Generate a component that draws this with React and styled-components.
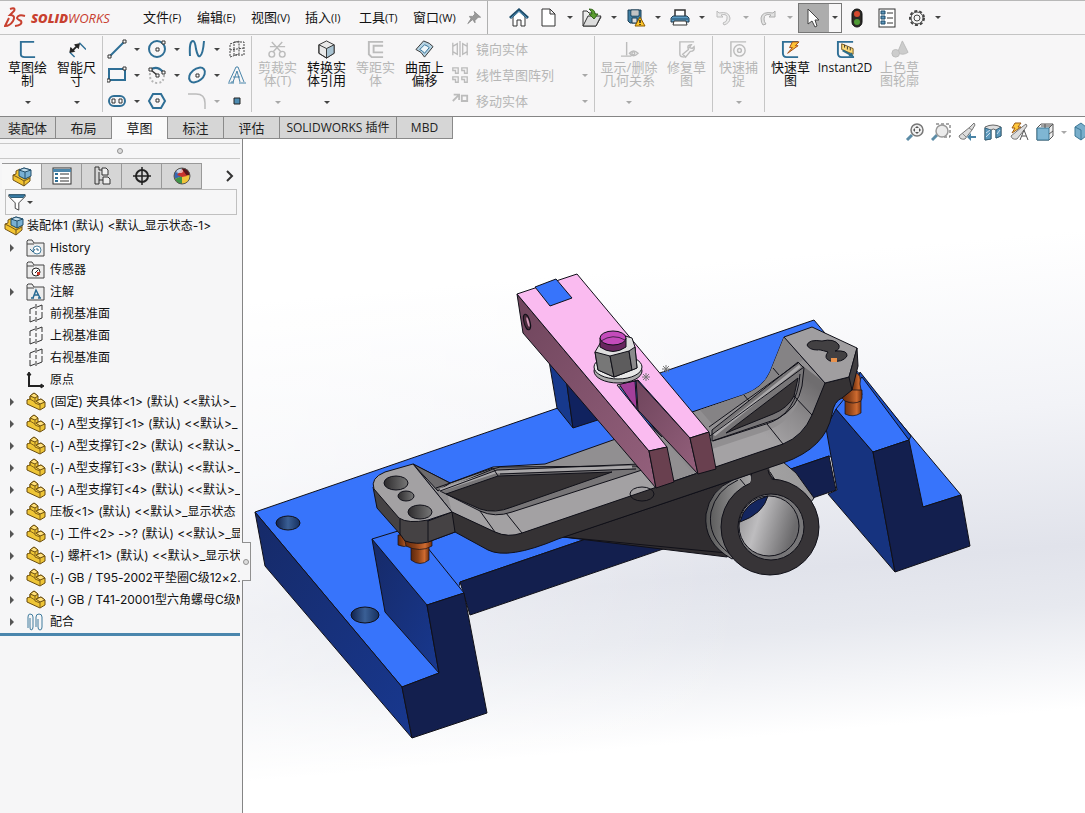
import React from 'react'
import styled, { createGlobalStyle } from 'styled-components'

const GlobalStyle = createGlobalStyle`
* {
    box-sizing: border-box;
}

body {
    margin: 0;
    background: #fff;
    color: #111;
    font-family: 'Open Sans', 'Noto Sans CJK SC', sans-serif;
    font-size: 12px;
}

button {
    border: 0;
    padding: 0;
    background: none;
    color: inherit;
    font: inherit;
}

ul {
    list-style: none;
    margin: 0;
    padding: 0;
}
`

const Page = styled.div`
display: flex;
flex-direction: column;
min-height: 100vh;
overflow: hidden;
`

const Svg = styled.svg`
display: block;
flex: none;
fill: none;
stroke-width: ${({ $line }) => $line || 1};
`

/* top bar */

const TopBar = styled.header`
display: flex;
align-items: center;
height: 35px;
border-top: 1px solid #b8b8b8;
border-bottom: 1px solid #c4c4c4;
background: #f7f6f7;
`

const Brand = styled.div`
display: flex;
align-items: center;
gap: 5px;
width: 143px;
padding-left: 4px;
color: #c8402f;
font-family: 'Open Sans', sans-serif;
font-size: 13px;
font-style: italic;
`

const BrandName = styled.span`
font-weight: 400;

b {
    font-weight: 800;
}
`

const Menu = styled.nav`
display: flex;
align-items: center;
align-self: stretch;
width: 345px;
border-right: 1px solid #b0b0b0;
`

const MenuItem = styled.button`
width: 54px;
font-size: 13px;
line-height: 20px;
text-align: left;
white-space: nowrap;

small {
    font-size: 11px;
}
`

const QuickBar = styled.div`
display: flex;
align-items: center;
padding-left: 16px;
`

const QuickItem = styled.div`
display: flex;
align-items: center;
height: 30px;
border: 1px solid ${({ $active }) => ($active ? '#777' : 'transparent')};
border-width: ${({ $active }) => ($active ? '1px' : '1px 0')};
`

const QuickButton = styled.button`
display: flex;
align-items: center;
justify-content: center;
width: ${({ $wide }) => ($wide ? 30 : 28)}px;
height: 28px;
background: ${({ $active }) => ($active ? '#adadad' : 'none')};
`

const ArrowButton = styled.button`
display: flex;
align-items: center;
justify-content: center;
width: ${({ $width }) => $width || 16}px;
height: 20px;
color: #444;

&:disabled {
    color: #a8a8a8;
}

&::after {
    content: '';
    border: 3px solid transparent;
    border-top-color: currentColor;
    border-bottom: 0;
}
`

/* ribbon */

const Ribbon = styled.div`
display: flex;
height: 82px;
padding: 1px 0 4px 2px;
border-bottom: 1px solid #858585;
background: #f7f6f7;
`

const Group = styled.div`
display: flex;
padding: 0 1px;
border-right: 1px solid #c6c6c6;

&:last-child {
    border-right: 0;
}
`

const Tool = styled.div`
display: flex;
flex-direction: column;
align-items: center;
justify-content: space-between;
width: ${({ $width }) => $width || 49}px;
`

const ToolButton = styled.button`
display: flex;
flex-direction: column;
align-items: center;
width: 100%;
padding-top: 4px;
font-size: ${({ $latin }) => ($latin ? 12 : 13)}px;
line-height: 13px;
white-space: nowrap;
color: #111;

&:disabled {
    color: #b6b6b6;
}
`

const ToolText = styled.span`
margin-top: 2px;
text-align: center;
white-space: pre-line;
`

const SketchGrid = styled.div`
display: grid;
grid-template-columns: 40px 40px 40px 25px;
grid-template-rows: repeat(3, 26px);
padding-left: 1px;
width: 146px;
`

const SketchCell = styled.div`
display: flex;
align-items: center;
`

const SketchButton = styled.button`
display: flex;
align-items: center;
justify-content: center;
width: 24px;
height: 24px;
`

const EntityList = styled.div`
display: grid;
grid-template-rows: repeat(3, 26px);
width: 144px;
padding-left: 2px;
`

const EntityRow = styled.div`
display: flex;
align-items: center;
justify-content: space-between;
`

const EntityButton = styled.button`
display: flex;
align-items: center;
gap: 7px;
font-size: 13px;
line-height: 20px;

&:disabled {
    color: #b6b6b6;
}
`

/* tabs */

const TabStrip = styled.div`
position: relative;
z-index: 1;
display: flex;
justify-content: space-between;
height: 22px;
`

const Tabs = styled.div`
display: flex;
border-bottom: 1px solid #8a8a8a;
`

const Tab = styled.button`
width: ${({ $width }) => $width || 56}px;
height: ${({ $active }) => ($active ? 22 : 21)}px;
border-right: 1px solid #8a8a8a;
background: ${({ $active }) => ($active ? '#fafafa' : '#d6d6d6')};
font-size: ${({ $latin }) => ($latin ? 12 : 13)}px;
line-height: 20px;
white-space: nowrap;
color: #222;
`

const HeadsUp = styled.div`
display: flex;
align-items: flex-start;
width: 180px;
padding-top: 5px;
overflow: visible;
`

const ViewButton = styled.button`
flex: none;
width: 26px;
height: 20px;
`

/* feature tree */

const Body = styled.div`
display: flex;
flex: 1;
`

const Sidebar = styled.aside`
position: relative;
flex: none;
width: 243px;
border-right: 1px solid #858585;
background: #f6f6f7;
`

const Splitter = styled.div`
display: flex;
align-items: center;
justify-content: center;
width: 240px;
height: 16px;
margin-top: 4px;
border-top: 1px solid #c8c8c8;
border-bottom: 1px solid #c8c8c8;
`

const Dot = styled.span`
width: 6px;
height: 6px;
border: 1px solid #909090;
border-radius: 50%;
background: #ddd;
`

const PanelTabs = styled.div`
display: flex;
width: 240px;
height: 26px;
margin-top: 4px;
padding-left: 2px;
`

const PanelTab = styled.button`
display: flex;
align-items: center;
justify-content: center;
width: 40px;
height: 26px;
border: 1px solid #999;
border-width: ${({ $active }) => ($active ? '1px 1px 0 0' : '1px 1px 1px 0')};
background: ${({ $active }) => ($active ? '#f8f8f8' : '#d6d6d6')};
`

const MoreButton = styled.button`
display: flex;
align-items: center;
justify-content: center;
width: 20px;
margin-left: 18px;
`

const Filter = styled.label`
display: flex;
align-items: center;
width: 232px;
height: 26px;
margin: 0 0 0 5px;
border: 1px solid #c0c0c0;
padding-left: 2px;
`

const FilterInput = styled.input`
flex: 1;
min-width: 0;
border: 0;
outline: 0;
background: none;
`

const Tree = styled.ul`
width: 240px;
border-bottom: 3px solid #4a86ad;
overflow: hidden;
font-family: Inter, 'Noto Sans CJK SC', sans-serif;
font-variant-ligatures: none;
`

const Node = styled.li`
display: flex;
align-items: center;
height: 22px;
padding-left: ${({ $root }) => ($root ? 4 : 8)}px;
white-space: nowrap;
font-size: 12px;
line-height: 20px;
`

const Expander = styled.button`
flex: none;
width: 18px;
height: 20px;
visibility: ${({ $hidden }) => ($hidden ? 'hidden' : 'visible')};

&::after {
    content: '';
    display: block;
    width: 0;
    margin-left: 2px;
    border: 4px solid transparent;
    border-left-color: #555;
    border-right: 0;
}
`

const NodeText = styled.span`
margin-left: ${({ $root }) => ($root ? 3 : 4)}px;
`

const Handle = styled.button`
position: absolute;
top: 403px;
right: -9px;
display: flex;
align-items: center;
justify-content: center;
width: 9px;
height: 39px;
border: 1px solid #909090;
border-left: 0;
background: #f6f6f7;
`

const Viewport = styled.main`
flex: 1;
min-width: 0;
background:
    linear-gradient(90deg, rgba(255, 255, 255, 0.5) 0%, rgba(255, 255, 255, 0) 60%),
    linear-gradient(175deg, #fff 0%, #fff 22%, #f2f3f7 45%, #e1e3eb 64%, #e7e9ef 72%, #fff 86%, #fff 100%);
`

const Model = styled.svg`
display: block;
width: 100%;
height: 100%;
fill: none;
stroke: #101018;
stroke-width: 1;
stroke-linejoin: round;
`

const B = '#2f6f96'
const K = '#333'
const G = '#bcbcbc'

const part = (
    <g stroke="#6a4d10" strokeLinejoin="round">
        <path d="M1 8 L4 7 V4 L8 1 L12 4 V8 L15 7 L19 10 V15 L14 18 L1 12Z" fill="#eec536" />
        <path d="M4 4 L8 1 L12 4 L9 6Z M10 9 L15 7 L19 10 L14 12Z" fill="#ffe07a" />
        <path d="M9 6 V11 L14 13 M14 12 V18 M4 7 V4 M1 8 L4 7 L9 10" stroke="#84641a" />
    </g>
)

const assembly = (
    <g strokeLinejoin="round">
        <path d="M1 8 L4 7 V4 L8 2 L9 9 L13 12 L18 9 V14 L12 19 L1 13Z" fill="#f3c431" stroke="#73541a" />
        <path d="M1 8 L7 11 L12 14 V19 M12 14 L18 11" stroke="#73541a" />
        <path d="M7 3 L12 1 L19 3 V9 L13 12 L7 9Z" fill="#79b0d3" stroke="#234f6b" />
        <path d="M7 3 L12 1 L19 3 L13 5Z" fill="#c2ddec" stroke="#234f6b" />
        <path d="M13 5 V12" stroke="#234f6b" />
    </g>
)

const folder = <path d="M1 3 V18 H18 V5 H8 L6 2 H2 L1 3 M1 6 H8" fill="#ececec" stroke="#444" />
const plane = <path d="M4 5 L9 3 M11 3 L16 1 V6 M16 8 V14 L11 16 M9 16 L4 18 V12 M4 10 V5 M10 0 V5 M10 7 V11 M10 13 V18" stroke="#333" />

const icons = {
    home: (
        <g>
            <path d="M4 9 V18 H8 V12 H12 V18 H16 V9 L10 3Z" fill="#fff" stroke={K} />
            <path d="M1 10 L10 2 L19 10" stroke="#1d4c6a" strokeWidth="3" />
            <path d="M2 10 L10 3 L18 10" stroke="#5d9cc3" />
        </g>
    ),
    file: <path d="M4 1 H12 L17 6 V18 H4Z M12 1 V6 H17" fill="#fff" stroke={K} />,
    open: (
        <g>
            <path d="M1 18 V3 H5 L7 5 H13 V9 H19 L14 18Z" fill="#ececec" stroke={K} />
            <path d="M1 18 L6 8 H19 L14 18Z" fill="#ddd" stroke={K} />
            <path d="M7 1 Q13 1 13 6 H16 L12 11 L7 6 H10 Q10 3 7 1Z" fill="#5b9d2f" stroke="#32641a" />
        </g>
    ),
    save: (
        <g>
            <path d="M2 2 H15 V15 H4 L2 13Z" fill="#3f7ea4" stroke="#1d3f55" />
            <path d="M5 2 H13 V8 H5Z" fill="#fff" stroke="#1d3f55" />
            <path d="M6 4 H12 M6 6 H12" stroke="#888" />
            <path d="M6 10 H11 V15 H6Z" fill="#ddd" stroke="#1d3f55" />
            <path d="M14 9 L19 18 H9Z" fill="#ffc629" stroke="#8a5a00" />
            <path d="M14 12 V15 M14 16 V17" stroke="#222" strokeWidth="1.500" />
        </g>
    ),
    print: (
        <g>
            <path d="M5 9 V2 H15 V9" fill="#fff" stroke={K} strokeWidth="1.500" />
            <path d="M1 10 L3 8 H17 L19 10 V14 H1Z" fill="#5e9cc3" stroke="#1f3d52" />
            <path d="M2 11 H18" stroke="#1f4a66" />
            <path d="M4 13 H16 L17 17 H3Z" fill="#fff" stroke={K} />
        </g>
    ),
    undo: <path d="M3 3 V9 H9 L7 7 Q14 5 13 11 Q13 14 9 15 L10 17 Q16 15 16 10 Q15 3 5 5Z" fill="#ececec" stroke={G} />,
    redo: <path d="M17 3 V9 H11 L13 7 Q6 5 6 11 Q6 14 8 16 L5 17 Q3 15 3 10 Q4 3 15 5Z" fill="#e2e2e2" stroke="#adadad" />,
    cursor: <path d="M4 1 V16 L8 13 L11 19 L13 18 L11 12 H15Z" fill="#fff" stroke="#444" />,
    light: (
        <g>
            <rect x="5" y="1" width="10" height="18" rx="5" fill="#2c2a26" stroke="#111" />
            <circle cx="10" cy="6" r="3" fill="#d5492e" />
            <circle cx="10" cy="14" r="3" fill="#4f9b35" />
        </g>
    ),
    options: (
        <g>
            <rect x="2" y="1" width="16" height="18" fill="#fff" stroke={K} />
            <path d="M4 3 H8 V6 H4Z M4 8 H8 V11 H4Z M4 13 H8 V16 H4Z" fill="#5b93b8" stroke="#1e4c6b" />
            <path d="M10 5 H16 M10 10 H16 M10 15 H16" stroke={K} />
        </g>
    ),
    gear: (
        <g stroke="#444">
            <circle cx="10" cy="10" r="7" strokeWidth="2" strokeDasharray="3 2" />
            <circle cx="10" cy="10" r="6" fill="#f4f4f4" />
            <circle cx="10" cy="10" r="3" />
        </g>
    ),
    pin: <path d="M9 2 L17 9 L14 9 L10 13 L10 16 L7 12 L1 17 L5 11 L3 8 L7 8 L10 5Z" fill="#999" stroke="#888" />,
    sketch: <path d="M17 2 H3 V15 Q3 18 7 18 H18" stroke={B} strokeWidth="2" />,
    dimension: (
        <g>
            <path d="M3 13 L8 18 M13 3 L20 10" stroke={B} strokeWidth="1.500" />
            <path d="M5 12 L11 6" stroke="#222" strokeWidth="2" />
            <path d="M3 13 L4 8 L8 12Z M13 4 L8 5 L12 9Z" fill="#222" stroke="#222" />
        </g>
    ),
    line: (
        <g>
            <path d="M3 17 L17 3" stroke={B} strokeWidth="2" />
            <path d="M1 16 H4 V19 H1Z M16 1 H19 V4 H16Z" fill="#fff" stroke={K} />
        </g>
    ),
    circle: (
        <g>
            <circle cx="10" cy="10" r="8" stroke={B} strokeWidth="2" />
            <path d="M9 9 H12 V12 H9Z M15 2 H18 V5 H15Z" fill="#fff" stroke={K} />
        </g>
    ),
    spline: <path d="M3 17 Q2 2 6 2 Q8 2 9 10 Q11 19 13 17 Q16 15 17 2" stroke={B} strokeWidth="2" />,
    planes: (
        <g stroke="#444" strokeDasharray="2 1">
            <path d="M3 5 L12 2 V15 L3 18Z M7 3 H17 V16 H7Z M3 11 L17 9" />
        </g>
    ),
    rect: (
        <g>
            <path d="M2 4 H18 V15 H2Z" stroke={B} strokeWidth="2" />
            <path d="M0 14 H3 V17 H0Z M16 2 H19 V5 H16Z" fill="#fff" stroke={K} />
        </g>
    ),
    arc: (
        <g>
            <path d="M3 8 Q2 17 10 18 Q17 18 17 10" stroke="#b5b5b5" strokeWidth="2" strokeDasharray="2 2" />
            <path d="M3 5 Q10 0 16 7" stroke={B} strokeWidth="2" />
            <path d="M4 5 L10 10" stroke={K} strokeWidth="1.500" />
            <path d="M2 3 H5 V6 H2Z M9 9 H12 V12 H9Z M15 6 H18 V9 H15Z" fill="#fff" stroke={K} />
        </g>
    ),
    ellipse: (
        <g>
            <ellipse cx="10" cy="10" rx="9" ry="6" transform="rotate(-40 10 10)" stroke={B} strokeWidth="2" />
            <path d="M9 9 H12 V12 H9Z" fill="#fff" stroke={K} />
        </g>
    ),
    text: <path d="M2 17 L9 2 H11 L17 17 M7 17 L4 17 M13 17 L10 6 L6 17 M6 12 H13 M1 18 H7 M12 18 H19" stroke="#4884a9" />,
    slot: (
        <g>
            <rect x="2" y="5" width="16" height="10" rx="5" stroke={B} strokeWidth="2" />
            <path d="M5 8 H8 V12 H5Z M12 8 H15 V12 H12Z" fill="#fff" stroke={K} />
        </g>
    ),
    polygon: (
        <g>
            <path d="M6 3 H14 L18 10 L14 17 H6 L2 10Z" stroke={B} strokeWidth="2" />
            <path d="M9 8 H12 V11 H9Z" fill="#fff" stroke={K} />
        </g>
    ),
    fillet: <path d="M1 3 H9 Q18 3 18 12 V18" stroke={G} strokeWidth="1.500" />,
    point: <path d="M7 7 H13 V13 H7Z" fill="#4e8cb2" stroke="#222" />,
    trim: (
        <g stroke={G} strokeWidth="1.500">
            <path d="M4 2 L14 13 M15 2 L5 13 M2 7 H18" />
            <circle cx="4" cy="15" r="3" />
            <circle cx="15" cy="15" r="3" />
        </g>
    ),
    convert: (
        <g stroke={K}>
            <path d="M2 5 L10 1 L18 5 V14 L10 19 L2 14Z" fill="#e9e9e9" />
            <path d="M10 9 L18 5 V14 L10 19Z" fill="#a9c3d2" />
            <path d="M2 5 L10 9 M2 5 V14 L10 19" />
        </g>
    ),
    offset: <path d="M18 2 H3 V15 L6 18 H18 M18 6 H8 V13 H18" stroke={G} strokeWidth="2" />,
    surface: (
        <g stroke={K}>
            <path d="M1 10 L9 1 Q16 3 19 7 L10 18 Q7 12 1 10Z" fill="#b6d3e3" />
            <path d="M5 10 L10 5 Q13 6 15 8 L10 14 Q8 11 5 10Z" fill="#eef6fa" stroke={B} />
        </g>
    ),
    mirror: <path d="M10 1 V19 M2 3 V17 M2 7 L7 4 V16 L2 13 M18 3 V17 M18 7 L13 4 V16 L18 13" stroke={G} strokeWidth="1.500" />,
    pattern: <path d="M2 2 H8 V8 H5 V5 H2Z M12 2 H18 V8 H15 V5 H12Z M2 12 H8 V18 H5 V15 H2Z M12 12 H18 V18 H15 V15 H12Z" stroke={G} strokeWidth="1.500" />,
    move: <path d="M2 10 L8 4 M3 3 H9 V9 M12 4 H18 V10 H12Z" stroke={G} strokeWidth="2" />,
    relation: (
        <g stroke={G} strokeWidth="1.500">
            <path d="M7 2 V16 M1 17 H12 M10 14 Q14 9 19 14 Q14 19 10 14Z" />
            <circle cx="14" cy="14" r="1.500" />
        </g>
    ),
    repair: (
        <g stroke={G} strokeWidth="1.500">
            <path d="M18 2 H3 V15 Q3 18 8 18" />
            <path d="M6 15 L12 10 Q10 5 15 5 L13 8 L16 9 L18 7 Q19 12 14 12 L9 18Z" />
        </g>
    ),
    snap: (
        <g stroke={G} strokeWidth="1.500">
            <path d="M18 2 H2 V18" />
            <circle cx="11" cy="11" r="6" />
            <circle cx="11" cy="11" r="2" />
        </g>
    ),
    rapid: (
        <g>
            <path d="M18 2 H2 V14 Q2 18 6 18 H18" stroke={B} strokeWidth="2" />
            <path d="M12 2 H19 L15 6 H18 L7 14 L12 8 H9Z" fill="#ffc234" stroke="#a34b16" />
        </g>
    ),
    instant: (
        <g>
            <path d="M18 2 H2 V14 Q2 18 6 18 H19" stroke={B} strokeWidth="2" />
            <path d="M6 4 L18 9 V15 L6 10Z" fill="#ffdc78" stroke="#70531b" />
            <path d="M9 5 V8 M12 7 V10 M15 8 V11" stroke="#333" />
            <path d="M7 11 L16 16" stroke="#2d6d88" strokeWidth="2" />
            <path d="M19 18 L13 17 L16 13Z" fill="#2d6d88" />
        </g>
    ),
    shaded: (
        <g fill="#ccc" stroke={G}>
            <path d="M13 1 L19 13 Q13 17 8 13Z" />
            <circle cx="6" cy="14" r="4" />
        </g>
    ),
    assembly,
    part,
    list: (
        <g>
            <rect x="1" y="2" width="18" height="16" fill="#fff" stroke={K} />
            <path d="M1 3 H19 V6 H1Z" fill="#4c86aa" />
            <path d="M3 8 H6 M3 12 H6 M3 15 H6" stroke={B} strokeWidth="2" />
            <path d="M8 8 H17 M8 12 H17 M8 15 H17" stroke={K} />
        </g>
    ),
    config: (
        <g stroke={K}>
            <path d="M3 1 H7 V4 H10 M3 1 V18 H7 V6 M7 14 H11" />
            <path d="M10 2 H14 L16 4 V9 H10Z M11 11 H16 L18 13 V18 H11Z" fill="#eee" />
        </g>
    ),
    target: (
        <g stroke="#222" strokeWidth="2">
            <circle cx="10" cy="10" r="6" />
            <path d="M10 1 V19 M1 10 H19" strokeWidth="1.500" />
        </g>
    ),
    ball: (
        <g>
            <circle cx="10" cy="10" r="8" fill="#f0c43a" />
            <path d="M10 10 L2 9 Q3 3 10 2Z" fill="#7e9ac3" />
            <path d="M10 10 L10 2 Q17 2 18 9Z" fill="#56151c" />
            <path d="M10 10 L3 13 Q1 9 3 6Z" fill="#3568b4" />
            <path d="M10 10 L3 13 Q5 18 10 18Z" fill="#3f9448" />
            <path d="M5 9 L10 3 L15 10 L10 11Z" fill="#c8342e" />
            <ellipse cx="8" cy="5" rx="3" ry="2" fill="#fff" opacity=".6" />
            <circle cx="10" cy="10" r="8" stroke="#555" />
        </g>
    ),
    chevron: <path d="M7 5 L12 10 L7 15" stroke="#333" strokeWidth="2" />,
    funnel: (
        <g>
            <path d="M1 2 H19 V4 L12 11 V19 L8 17 V11 L1 4Z" fill="#fff" stroke="#333" />
            <path d="M1 2 H19 L17 5 H3Z" fill="#3a7ea8" stroke="#24536f" />
        </g>
    ),
    history: (
        <g>
            {folder}
            <circle cx="11" cy="12" r="4" fill="#fff" stroke="#49809f" />
            <path d="M11 10 V12 H13 M4 11 L7 14 L9 11" stroke="#2c6689" />
        </g>
    ),
    sensor: (
        <g>
            {folder}
            <circle cx="10" cy="12" r="4" fill="#fff" stroke="#222" />
            <path d="M9 13 L12 10" stroke="#222" />
            <path d="M11 12 H14 V15 H11Z" fill="#c93a2b" />
        </g>
    ),
    notes: (
        <g>
            {folder}
            <path d="M7 16 L10 8 L14 16 M8 13 H12 M5 16 H8 M12 16 H15" stroke="#276a93" strokeWidth="1.500" />
        </g>
    ),
    plane,
    origin: (
        <g stroke="#222" strokeWidth="2">
            <path d="M3 5 V16 H15" />
            <path d="M1 5 L3 2 L5 5Z M15 14 L18 16 L15 18Z" fill="#222" strokeWidth="1" />
        </g>
    ),
    mates: (
        <g stroke="#3f7b9d">
            <path d="M2 16 V5 Q2 2 4 2 Q7 2 7 5 V15 Q7 18 5 18 Q4 18 4 15 V6" />
            <path d="M10 15 V5 Q10 2 13 2 Q16 2 16 5 V15 Q16 18 14 18 Q12 18 12 15 V7" />
        </g>
    ),
    zoomFit: (
        <g>
            <path d="M2 18 L7 13" stroke="#5c8ca6" strokeWidth="3" />
            <circle cx="12" cy="8" r="6" fill="#f1f1f1" stroke="#777" strokeWidth="1.500" />
            <path d="M12 4 L14 6 H10Z M12 12 L14 10 H10Z M8 8 L10 6 V10Z M16 8 L14 6 V10Z" fill="#555" />
        </g>
    ),
    zoomArea: (
        <g>
            <path d="M5 2 H19 V15 H12" stroke="#555" strokeDasharray="3 2" />
            <path d="M1 18 L6 13" stroke="#5c8ca6" strokeWidth="3" />
            <circle cx="11" cy="9" r="6" fill="#ececec" stroke="#999" strokeWidth="1.500" />
        </g>
    ),
    previous: (
        <g>
            <path d="M2 14 L13 5 L17 1 L18 3 L15 8 L8 17 Q3 18 2 14Z" fill="#dcdcdc" stroke="#777" />
            <path d="M5 11 L9 15 M12 6 L15 8" stroke="#888" />
            <path d="M19 14 H14 V11 L10 15 L14 19 V16 H19Z" fill="#4a84a6" />
        </g>
    ),
    section: (
        <g>
            <path d="M2 5 Q10 1 18 5 V14 L13 16 V8 Q10 6 8 8 V17 L2 18Z" fill="#ddd" stroke="#666" />
            <path d="M2 6 L8 8 V17 L2 18Z M13 8 L18 5 V14 L13 16Z" fill="#5d9abd" stroke="#35647f" />
            <path d="M3 11 L7 8 M3 15 L7 11 M14 12 L17 8" stroke="#cde" />
        </g>
    ),
    dynamic: (
        <g>
            <path d="M2 14 L13 5 L17 2 L18 4 L15 8 L8 17 Q3 18 2 14Z" fill="#ddd" stroke="#777" />
            <path d="M6 1 L12 1 L9 5 L12 5 L3 11 L6 6 H3Z" fill="#ffc83d" stroke="#9b5b17" />
            <path d="M11 18 L15 8 L19 18 M13 14 H17" stroke="#555" />
        </g>
    ),
    cube: (
        <g>
            <path d="M6 2 H18 V14 L14 18 H2 V6Z" fill="#eee" stroke="#555" />
            <path d="M2 6 H14 V18 H2Z" fill="#7fb6d3" stroke="#3c7896" />
            <path d="M14 6 L18 2 M10 2 V6 M14 12 L18 9 M6 4 H16" stroke="#555" />
        </g>
    ),
    style: <path d="M8 5 L14 1 L19 5 V14 L14 18 L8 14Z M8 5 L14 8 V18" fill="#78aecb" stroke="#3c7896" />,
}

const Icon = ({ name, size = 20 }) => (
    <Svg width={size} height={size} viewBox="0 0 20 20" aria-hidden="true">
        {icons[name]}
    </Svg>
)

const menus = [
    ['文件', '(F)'],
    ['编辑', '(E)'],
    ['视图', '(V)'],
    ['插入', '(I)'],
    ['工具', '(T)'],
    ['窗口', '(W)'],
]

const quick = [
    { icon: 'home', label: '主页', wide: true },
    { icon: 'file', label: '新建', arrow: true },
    { icon: 'open', label: '打开', arrow: true },
    { icon: 'save', label: '保存', arrow: true },
    { icon: 'print', label: '打印', arrow: true },
    { icon: 'undo', label: '撤消', arrow: true, disabled: true },
    { icon: 'redo', label: '重做', arrow: true, disabled: true },
    { icon: 'cursor', label: '选择', arrow: true, active: true, wide: true },
    { icon: 'light', label: '重建模型', wide: true },
    { icon: 'options', label: '文件属性', wide: true },
    { icon: 'gear', label: '选项', arrow: true, wide: true },
]

const groups = [
    [
        { icon: 'sketch', text: '草图绘\n制', arrow: true },
        { icon: 'dimension', text: '智能尺\n寸', arrow: true },
    ],
    [
        { icon: 'trim', text: '剪裁实\n体(T)', arrow: true, disabled: true },
        { icon: 'convert', text: '转换实\n体引用', arrow: true },
        { icon: 'offset', text: '等距实\n体', disabled: true },
        { icon: 'surface', text: '曲面上\n偏移' },
    ],
    [
        { icon: 'relation', text: '显示/删除\n几何关系', arrow: true, disabled: true, width: 66 },
        { icon: 'repair', text: '修复草\n图', disabled: true },
    ],
    [{ icon: 'snap', text: '快速捕\n捉', arrow: true, disabled: true }],
    [
        { icon: 'rapid', text: '快速草\n图' },
        { icon: 'instant', text: 'Instant2D', width: 60, latin: true },
        { icon: 'shaded', text: '上色草\n图轮廓', disabled: true },
    ],
]

const sketchTools = [
    ['line', '直线', true],
    ['circle', '圆', true],
    ['spline', '样条曲线', true],
    ['planes', '基准面'],
    ['rect', '矩形', true],
    ['arc', '圆弧', true],
    ['ellipse', '椭圆', true],
    ['text', '文字'],
    ['slot', '槽口', true],
    ['polygon', '多边形'],
    ['fillet', '圆角', true, true],
    ['point', '点'],
]

const entities = [
    ['mirror', '镜向实体'],
    ['pattern', '线性草图阵列', true],
    ['move', '移动实体', true],
]

const tabs = [
    { text: '装配体' },
    { text: '布局' },
    { text: '草图', active: true },
    { text: '标注' },
    { text: '评估' },
    { text: 'SOLIDWORKS 插件', width: 117, latin: true },
    { text: 'MBD', latin: true },
]

const panelTabs = ['assembly', 'list', 'config', 'target', 'ball']

const views = ['zoomFit', 'zoomArea', 'previous', 'section', 'dynamic', 'cube']

const nodes = [
    ['history', 'History', true],
    ['sensor', '传感器'],
    ['notes', '注解', true],
    ['plane', '前视基准面'],
    ['plane', '上视基准面'],
    ['plane', '右视基准面'],
    ['origin', '原点'],
    ['part', '(固定) 夹具体<1> (默认) <<默认>_', true],
    ['part', '(-) A型支撑钉<1> (默认) <<默认>_', true],
    ['part', '(-) A型支撑钉<2> (默认) <<默认>_', true],
    ['part', '(-) A型支撑钉<3> (默认) <<默认>_', true],
    ['part', '(-) A型支撑钉<4> (默认) <<默认>_', true],
    ['part', '压板<1> (默认) <<默认>_显示状态', true],
    ['part', '(-) 工件<2> ->? (默认) <<默认>_显', true],
    ['part', '(-) 螺杆<1> (默认) <<默认>_显示状', true],
    ['part', '(-) GB / T95-2002平垫圈C级12×2.', true],
    ['part', '(-) GB / T41-20001型六角螺母C级M', true],
    ['mates', '配合', true],
]

const Tools = ({ tools }) => tools.map(tool => (
    <Tool key={tool.icon} $width={tool.width}>
        <ToolButton disabled={tool.disabled} $latin={tool.latin}>
            <Icon name={tool.icon} size={19} />
            <ToolText>{tool.text}</ToolText>
        </ToolButton>
        {tool.arrow && <ArrowButton disabled={tool.disabled} aria-label={tool.text} />}
    </Tool>
))

const Fixture = () => (
    <Model viewBox="243 139 842 674" role="img" aria-label="装配体1">
        <defs>
            <linearGradient id="side" x1="0" y1="0" x2="1" y2="1">
                <stop offset="0" stopColor="#162a68" />
                <stop offset="1" stopColor="#18388f" />
            </linearGradient>
            <linearGradient id="pinkSide" x1="0" y1="0" x2="1" y2="1">
                <stop offset="0" stopColor="#6f455c" />
                <stop offset="1" stopColor="#94607c" />
            </linearGradient>
            <linearGradient id="metal" x1="0" y1="0" x2="1" y2="0">
                <stop offset="0" stopColor="#555" />
                <stop offset=".4" stopColor="#a5a4a5" />
                <stop offset="1" stopColor="#9a999a" />
            </linearGradient>
            <linearGradient id="bore" x1="0" y1="0" x2="1" y2=".3">
                <stop offset="0" stopColor="#8f8e90" />
                <stop offset=".4" stopColor="#bebdbf" />
                <stop offset="1" stopColor="#6b6a6c" />
            </linearGradient>
            <linearGradient id="copper" x1="0" y1="0" x2="1" y2="0">
                <stop offset="0" stopColor="#5d270c" />
                <stop offset=".4" stopColor="#8c4218" />
                <stop offset=".75" stopColor="#cf6b30" />
                <stop offset="1" stopColor="#6d2e0e" />
            </linearGradient>
            <linearGradient id="hole" x1="0" y1="0" x2="1" y2="0">
                <stop offset="0" stopColor="#10224f" />
                <stop offset=".5" stopColor="#3a5f95" />
                <stop offset="1" stopColor="#16305f" />
            </linearGradient>
            <linearGradient id="darkHole" x1="0" y1="0" x2="1" y2="0">
                <stop offset="0" stopColor="#2d2b2d" />
                <stop offset="1" stopColor="#777" />
            </linearGradient>
            <linearGradient id="bend" gradientUnits="userSpaceOnUse" x1="770" y1="440" x2="815" y2="385">
                <stop offset="0" stopColor="#a4a2a4" />
                <stop offset=".5" stopColor="#8d8b8d" />
                <stop offset="1" stopColor="#6f6d6f" />
            </linearGradient>
        </defs>

        {/* base plate */}
        <path d="M255 512 L814 320 L961 495 L923 507 L829 456 L460 582 L439 673 L402 687Z" fill="#3774fb" />
        <path d="M255 512 L402 687 L412 738 L265 566Z" fill="url(#side)" />
        <path d="M460 582 L829 456 L836 490 L470 615Z" fill="#131f4e" />
        <ellipse cx="288" cy="523" rx="12" ry="7" fill="url(#hole)" />
        <ellipse cx="365" cy="615" rx="14" ry="8" fill="url(#hole)" />

        {/* right foot */}
        <path d="M860 372 L911 436 L909 440 L858 378Z" fill="#1b4fc4" />
        <path d="M826 428 L836 409 L873 452 L895 572 L828 494 L837 490Z" fill="#16337f" />
        <path d="M836 409 L862 377 L909 440 L873 452Z" fill="#3774fb" />
        <path d="M873 452 L909 440 L923 507 L961 495 L970 546 L895 572Z" fill="#131f4e" />

        {/* left foot */}
        <path d="M372 539 L420 523 L464 593 L427 605Z" fill="#3774fb" stroke="none" />
        <path d="M398 531 L372 539 M427 605 L464 593 L427 547" />
        <path d="M372 539 L427 605 L439 673 L385 612Z" fill="url(#side)" />
        <path d="M427 605 L464 593 L487 713 L412 738 L402 687 L439 673Z" fill="#131f4e" />

        {/* post */}
        <path d="M548 355 L566 378 L573 428 L557 408Z" fill="#17398c" />
        <path d="M566 378 L604 395 L604 418 L573 428Z" fill="#10225f" />

        {/* support pins */}
        <g fill="url(#copper)" strokeWidth=".7">
            <path d="M398 535 V545 Q404 548 410 545 V535Z" />
            <path d="M411 538 V560 Q420 567 429 560 V538Z" />
            <path d="M404 536 H432 V546 Q420 553 406 546Z" />
            <path d="M855 372 Q862 375 860 384 L862 395 H850Z" />
            <path d="M841 390 H862 V398 L861 401 V413 Q853 418 845 414 V401 L841 397Z" />
            <path d="M845 401 Q853 405 861 401" />
        </g>

        {/* boss rib and cylinder */}
        <path d="M563 537 L727 482 L790 470 L812 495 L727 557Z" fill="#302d30" />
        <path d="M563 537 L727 553" />
        <path d="M732 559 Q703 543 706 514 Q710 490 733 480 L783 462 L796 473 L814 498 L790 530Z" fill="url(#metal)" />
        <path d="M730 554 Q707 537 711 512 Q716 490 738 480 M740 479 L750 491 M770 472 L775 480 L796 490" />
        <path d="M744 468 Q758 480 747 488 L728 505 L760 512 L790 486 Q768 484 769 462Z" fill="#373437" stroke="none" />
        <path d="M751 470 Q754 484 747 487 M768 470 Q769 479 780 481" />
        <ellipse cx="770" cy="527" rx="49" ry="48" fill="#373437" />
        <path d="M744 490 Q752 484 752 474 H768 Q769 480 780 483 L785 490Z" fill="#373437" stroke="none" />
        <ellipse cx="771" cy="527" rx="33" ry="33" fill="#777678" />
        <ellipse cx="769" cy="526" rx="30" ry="30" fill="url(#bore)" />
        <path d="M740 522 Q744 502 768 496 Q763 514 740 522Z" fill="#14265f" />

        {/* beam top */}
        <path d="M413 464 L450 483 L493 467 L545 464 L695 411 L743 395 Q763 388 770 372 L784 337 L825 383 L812 415 Q803 436 783 444 L522 533 Q508 538 495 532 L452 512Z" fill="#918f91" />
        <path d="M743 395 Q763 388 770 372 L784 337 L803 360 L712 424 L700 410Z" fill="#858385" stroke="none" />
        <path d="M413 464 L450 483 L438 491Z" fill="#6d6b6d" />
        <path d="M447 493 L480 511 Q495 518 512 512 L642 469 L655 488 L522 533 Q508 538 495 532 L452 512Z" fill="#a3a1a3" stroke="none" />
        <path d="M712 449 L766 431 Q792 422 800 397 L803 366 L825 383 L812 415 Q803 436 783 444 L715 467Z" fill="url(#bend)" stroke="none" />

        {/* beam front */}
        <path d="M452 512 L495 532 Q508 538 522 533 L783 444 Q803 436 812 415 L825 383 L853 376 L852 390 L842 398 Q834 401 832 414 Q826 448 783 463 L727 482 L558 539 Q508 560 488 550 L455 532 L428 542 L428 521Z" fill="#353234" />

        {/* left pocket */}
        <path d="M440 491 L493 469 L500 467 L636 466 L642 470 L512 512 Q495 518 480 511Z" fill="#777577" />
        <path d="M440 490 L495 472 L632 467" stroke="#aaa8aa" strokeWidth="3" />
        <path d="M446 494 L498 476 L612 472 L512 507 Q495 514 480 509Z" fill="#343133" />
        <path d="M436 488 L493 468 L498 476 M440 491 L497 470 L640 464 M500 474 L636 469 M480 511 L495 532 M506 513 L522 533" />

        {/* right pocket */}
        <path d="M712 430 L798 362 L804 368 L802 386 Q798 408 777 419 L712 441Z" fill="#777577" />
        <path d="M714 435 L800 366" stroke="#aaa8aa" strokeWidth="3" />
        <path d="M726 433 L798 378 L794 396 Q788 408 773 414Z" fill="#383537" />
        <path d="M710 436 L804 367 M709 427 L798 363 M713 441 L766 424 Q797 415 800 374 M767 424 L783 444 M794 396 L812 415 M744 395 L749 401 M773 368 L779 375" />

        {/* heads */}
        <path d="M373 487 L377 508 L400 534 L405 541 Q417 545 428 542 L455 532 L452 512 L428 521Z" fill="#454244" />
        <path d="M413 464 L385 472 Q370 478 374 489 L399 518 Q408 524 428 520 L452 512Z" fill="#a3a1a3" />
        <path d="M400 519 V535 M428 521 V541" />
        <ellipse cx="396" cy="483" rx="12" ry="7" fill="url(#darkHole)" />
        <ellipse cx="406" cy="496" rx="8" ry="5" fill="url(#darkHole)" />
        <ellipse cx="420" cy="512" rx="12" ry="7" fill="url(#darkHole)" />
        <path d="M784 337 L812 327 L857 348 L849 377 L825 383Z" fill="#a09ea0" />
        <path d="M857 348 L858 366 L852 390 L849 377Z" fill="#403d40" />
        <path d="M807 345 Q809 339 822 341 Q834 338 839 345 Q840 350 835 351 Q848 350 847 356 Q843 363 830 361 Q823 358 828 352 Q818 349 818 350 Q809 350 807 345Z" fill="#424042" />
        <path d="M831 358 H837 V362 H831Z" fill="#e9924d" stroke="none" />
        <ellipse cx="642" cy="494" rx="12" ry="7" />

        {/* clamp */}
        <path d="M618 385 L690 470 L698 474 L640 400Z" fill="#8d8b8d" stroke="none" />
        <path d="M638 409 L654 428 L662 437 L640 416Z" fill="#2c66e8" />
        <path d="M619 384 L635 381 L637 409 L630 400Z" fill="#a33f9a" />
        <path d="M636 379 L690 438 L698 474 L638 410Z" fill="url(#pinkSide)" />
        <path d="M517 294 L649 451 L656 488 L523 333Z" fill="url(#pinkSide)" />
        <path d="M517 294 L577 274 L709 432 L690 438 L638 380 L617 385 L667 447 L649 451Z" fill="#fabbf0" />
        <path d="M649 451 L667 447 L674 482 L656 488Z M690 438 L709 432 L716 469 L698 474Z" fill="#69404f" />
        <path d="M535 287 L556 279 L572 298 L550 306Z" fill="#3774fb" />
        <ellipse cx="527" cy="322" rx="3" ry="8" transform="rotate(-15 527 322)" fill="#4a2a3b" />
        <ellipse cx="528" cy="322" rx="1" ry="5" transform="rotate(-15 528 322)" fill="#d59dbb" stroke="none" />

        {/* washer, nut and stud */}
        <ellipse cx="618" cy="371" rx="24" ry="12" fill="#aaa" />
        <ellipse cx="618" cy="367" rx="24" ry="12" fill="#e7e7e7" />
        <path d="M595 352 L602 340 Q615 331 632 338 L635 347 L637 368 L614 377 L598 370Z" fill="#dedede" />
        <path d="M595 352 L610 356 L614 377 L598 370Z" fill="#777" />
        <path d="M610 356 L629 351 L632 370 L614 377Z" fill="#5d5c5d" />
        <path d="M629 351 L635 347 L637 368 L632 370Z" fill="#8b8a8b" />
        <path d="M600 338 V347 Q613 356 626 347 V338Z" fill="#68265f" />
        <ellipse cx="613" cy="338" rx="13" ry="7" fill="#c44bbb" />
        <path d="M601 341 Q613 333 625 340" strokeWidth=".7" />

        {/* origin marks */}
        <path d="M642 377 H650 M646 373 V381 M643 374 L649 380 M649 374 L643 380 M662 369 H670 M666 365 V373 M663 366 L669 372 M669 366 L663 372" stroke="#777" />
    </Model>
)

const App = () => (
    <Page>
        <GlobalStyle />
        <TopBar>
            <Brand>
                <Svg width="22" height="22" viewBox="0 0 22 22" stroke="#c8402f" $line={2}>
                    <path d="M6 2 Q12 0 10 4 L6 8 Q12 8 9 14 Q6 19 1 19 L5 11" />
                    <path d="M21 9 Q14 7 13 11 Q13 12 17 14 Q19 18 11 19" />
                </Svg>
                <BrandName><b>SOLID</b>WORKS</BrandName>
            </Brand>
            <Menu>
                {menus.map(([text, key]) => (
                    <MenuItem key={key}>{text}<small>{key}</small></MenuItem>
                ))}
                <button aria-label="固定菜单"><Icon name="pin" size={16} /></button>
            </Menu>
            <QuickBar>
                {quick.map(item => (
                    <QuickItem key={item.icon} $active={item.active}>
                        <QuickButton $wide={item.wide} $active={item.active} disabled={item.disabled} aria-label={item.label}>
                            <Icon name={item.icon} />
                        </QuickButton>
                        {item.arrow && <ArrowButton $width={item.wide ? 12 : 16} disabled={item.disabled} aria-label={`${item.label}菜单`} />}
                    </QuickItem>
                ))}
            </QuickBar>
        </TopBar>

        <Ribbon>
            <Group><Tools tools={groups[0]} /></Group>
            <Group>
                <SketchGrid>
                    {sketchTools.map(([icon, label, arrow, disabled]) => (
                        <SketchCell key={icon}>
                            <SketchButton disabled={disabled} aria-label={label}><Icon name={icon} /></SketchButton>
                            {arrow && <ArrowButton disabled={disabled} aria-label={`${label}菜单`} />}
                        </SketchCell>
                    ))}
                </SketchGrid>
            </Group>
            <Group>
                <Tools tools={groups[1]} />
                <EntityList>
                    {entities.map(([icon, text, arrow]) => (
                        <EntityRow key={icon}>
                            <EntityButton disabled><Icon name={icon} size={18} />{text}</EntityButton>
                            {arrow && <ArrowButton disabled aria-label={`${text}菜单`} />}
                        </EntityRow>
                    ))}
                </EntityList>
            </Group>
            <Group><Tools tools={groups[2]} /></Group>
            <Group><Tools tools={groups[3]} /></Group>
            <Group><Tools tools={groups[4]} /></Group>
        </Ribbon>

        <TabStrip>
            <Tabs>
                {tabs.map(tab => (
                    <Tab key={tab.text} $width={tab.width} $active={tab.active} $latin={tab.latin}>{tab.text}</Tab>
                ))}
            </Tabs>
            <HeadsUp>
                {views.map(name => (
                    <ViewButton key={name} aria-label={name}><Icon name={name} /></ViewButton>
                ))}
                <ArrowButton disabled aria-label="视图定向" />
                <ViewButton aria-label="显示样式"><Icon name="style" /></ViewButton>
            </HeadsUp>
        </TabStrip>

        <Body>
            <Sidebar>
                <Splitter><Dot /></Splitter>
                <PanelTabs>
                    {panelTabs.map((name, index) => (
                        <PanelTab key={name} $active={index === 0} aria-label={name}><Icon name={name} /></PanelTab>
                    ))}
                    <MoreButton aria-label="更多"><Icon name="chevron" /></MoreButton>
                </PanelTabs>
                <Filter>
                    <Icon name="funnel" size={18} />
                    <ArrowButton as="span" $width={8} />
                    <FilterInput aria-label="过滤器" />
                </Filter>
                <Tree>
                    <Node $root>
                        <Icon name="assembly" />
                        <NodeText $root>装配体1 (默认) &lt;默认_显示状态-1&gt;</NodeText>
                    </Node>
                    {nodes.map(([icon, text, open]) => (
                        <Node key={text}>
                            <Expander $hidden={!open} aria-label={text} />
                            <Icon name={icon} />
                            <NodeText>{text}</NodeText>
                        </Node>
                    ))}
                </Tree>
                <Handle aria-label="折叠"><Dot /></Handle>
            </Sidebar>
            <Viewport>
                <Fixture />
            </Viewport>
        </Body>
    </Page>
)

export default App
